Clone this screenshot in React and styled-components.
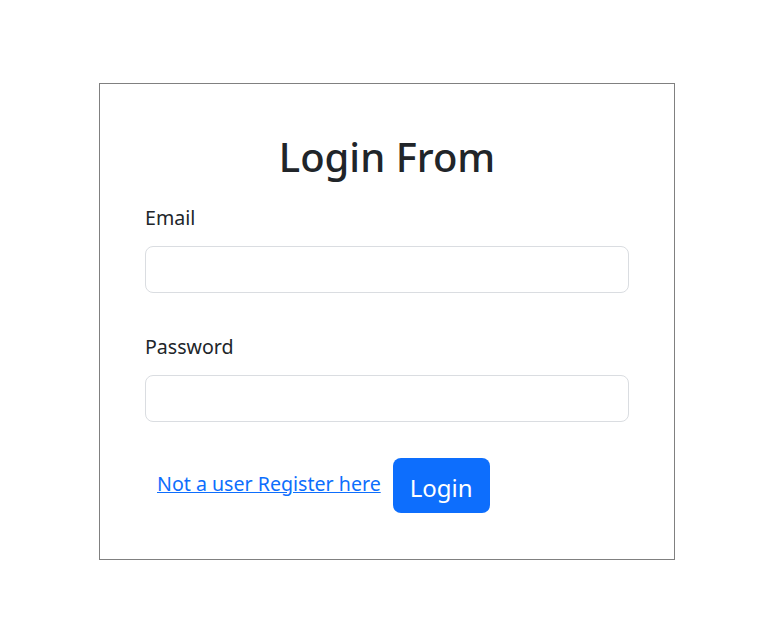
import React from "react";
import styled, { createGlobalStyle } from "styled-components";

const Global = createGlobalStyle`
  html, body { margin: 0; padding: 0; background: #fff; }
  body {
    font-family: "Noto Sans", "Open Sans", sans-serif;
    color: #212529;
    -webkit-font-smoothing: antialiased;
  }
  * { box-sizing: border-box; }
`;

const Page = styled.div`
  padding: 83px 0 0 99px;
`;

const Card = styled.form`
  width: 576px;
  height: 477px;
  border: 1px solid #808080;
  padding: 49px 45px 0 45px;
  display: flex;
  flex-direction: column;
`;

const Title = styled.h1`
  margin: 0 0 22px;
  font-size: 40px;
  font-weight: 500;
  line-height: 48px;
  text-align: center;
  color: #212529;
`;

const Field = styled.div`
  display: flex;
  flex-direction: column;
  margin-bottom: ${(p) => p.$mb}px;
`;

const Label = styled.label`
  font-size: 19.6px;
  line-height: 30px;
  margin-bottom: 13px;
  color: #212529;
`;

const Input = styled.input`
  width: 100%;
  height: 47px;
  border: 1px solid #dadde1;
  border-radius: 8px;
  padding: 8px 16px;
  font-size: 20px;
  font-family: inherit;
  outline: none;
`;

const Actions = styled.div`
  display: flex;
  align-items: center;
  gap: 12px;
  padding-left: 12px;
`;

const RegisterLink = styled.a`
  color: #0d6efd;
  text-decoration: underline;
  font-size: 19.6px;
  line-height: 30px;
  padding-bottom: 4px;
  cursor: pointer;
`;

const Button = styled.button`
  width: 97px;
  height: 55px;
  padding: 4px 0 0;
  background: #0d6efd;
  color: #fff;
  border: none;
  border-radius: 8px;
  font-family: inherit;
  font-size: 24px;
  line-height: 36px;
  cursor: pointer;
`;

export default function App() {
  return (
    <>
      <Global />
      <Page>
        <Card onSubmit={(e) => e.preventDefault()}>
          <Title>Login From</Title>
          <Field $mb={39}>
            <Label>Email</Label>
            <Input type="email" />
          </Field>
          <Field $mb={36}>
            <Label>Password</Label>
            <Input type="password" />
          </Field>
          <Actions>
            <RegisterLink href="#">Not a user Register here</RegisterLink>
            <Button type="submit">Login</Button>
          </Actions>
        </Card>
      </Page>
    </>
  );
}
